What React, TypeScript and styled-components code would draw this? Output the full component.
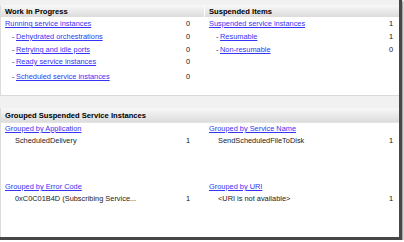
import React from 'react';
import styled, { createGlobalStyle } from 'styled-components';

const GlobalStyle = createGlobalStyle`
  html, body {
    margin: 0;
    padding: 0;
    background: #ffffff;
  }
  body {
    font-family: "Liberation Sans", Arial, sans-serif;
    font-size: 7.4px;
    color: #1a1a1a;
  }
`;

type Item = { label: string; value: number; space?: number };

const workItems: Item[] = [
    { label: 'Dehydrated orchestrations', value: 0, space: 1 },
    { label: 'Retrying and idle ports', value: 0, space: 1 },
    { label: 'Ready service instances', value: 0, space: 0 },
    { label: 'Scheduled service instances', value: 0, space: 3 },
];

const suspendedItems: Item[] = [
    { label: 'Resumable', value: 1, space: 1 },
    { label: 'Non-resumable', value: 0, space: 1 },
];

const groups = [
    { title: 'Grouped by Application', name: 'ScheduledDelivery', value: 1, side: 'left' },
    { title: 'Grouped by Service Name', name: 'SendScheduledFileToDisk', value: 1, side: 'right' },
    { title: 'Grouped by Error Code', name: '0xC0C01B4D (Subscribing Service...', value: 1, side: 'left' },
    { title: 'Grouped by URI', name: '<URI is not available>', value: 1, side: 'right' },
];

const App = () => {
    return (
        <>
            <GlobalStyle />
            <Frame>
                <TopSection>
                    <Column $side="left">
                        <Header>Work in Progress</Header>
                        <Body>
                            <Row $side="left">
                                <Link href="#">Running service instances</Link>
                                <Value>0</Value>
                            </Row>
                            {workItems.map((item) => (
                                <Row key={item.label} $side="left" $space={item.space}>
                                    <SubLabel>
                                        <Dash>-</Dash>
                                        <Link href="#">{item.label}</Link>
                                    </SubLabel>
                                    <Value>{item.value}</Value>
                                </Row>
                            ))}
                        </Body>
                    </Column>
                    <Column $side="right">
                        <Header>Suspended Items</Header>
                        <Body>
                            <Row $side="right">
                                <Link href="#">Suspended service instances</Link>
                                <Value>1</Value>
                            </Row>
                            {suspendedItems.map((item) => (
                                <Row key={item.label} $side="right" $space={item.space}>
                                    <SubLabel>
                                        <Dash>-</Dash>
                                        <Link href="#">{item.label}</Link>
                                    </SubLabel>
                                    <Value>{item.value}</Value>
                                </Row>
                            ))}
                        </Body>
                    </Column>
                </TopSection>

                <BottomSection>
                    <WideHeader>Grouped Suspended Service Instances</WideHeader>
                    <GroupGrid>
                        {groups.map((g) => (
                            <Group key={g.title} $side={g.side}>
                                <GroupTitle href="#">{g.title}</GroupTitle>
                                <GroupRow $side={g.side}>
                                    <span>{g.name}</span>
                                    <Value>{g.value}</Value>
                                </GroupRow>
                            </Group>
                        ))}
                    </GroupGrid>
                </BottomSection>
            </Frame>
        </>
    );
};

const Frame = styled.div`
  width: 399px;
  height: 232px;
  padding-top: 5px;
  background: #f1f1f1;
  border-right: 3px solid #474747;
  border-bottom: 3px solid #474747;
  box-shadow: 1px 1px 2px rgba(0, 0, 0, 0.5);
  display: flex;
  flex-direction: column;
`;

const TopSection = styled.div`
  height: 90px;
  display: grid;
  grid-template-columns: 203px 1fr;
  background: #ffffff;
  border-left: 1px solid #dcdcdc;
  border-bottom: 1px solid #dadada;
`;

const Column = styled.div<{ $side: string }>`
  display: flex;
  flex-direction: column;
  padding-left: ${(p) => (p.$side === 'left' ? '0' : '1px')};
`;

const Header = styled.div`
  height: 12px;
  display: flex;
  align-items: center;
  padding-left: 4px;
  background: linear-gradient(#f8f8f8, #dcdcdc);
  font-weight: 700;
  font-size: 7.6px;
  color: #000;
`;

const WideHeader = styled(Header)`
  height: 14px;
  border-bottom: 1px solid #e4e4e4;
`;

const Body = styled.div`
  padding-top: 1px;
  display: flex;
  flex-direction: column;
`;

const Row = styled.div<{ $side: string; $space?: number }>`
  height: 12px;
  line-height: 12px;
  margin-top: ${(p) => p.$space ?? 0}px;
  padding-left: 4px;
  padding-right: ${(p) => (p.$side === 'left' ? '14px' : '6px')};
  display: flex;
  justify-content: space-between;
  white-space: nowrap;
`;

const SubLabel = styled.span`
  display: flex;
  padding-left: 7px;
`;

const Dash = styled.span`
  width: 4px;
  color: #222;
`;

const Link = styled.a`
  color: #3434f4;
  text-decoration: underline;
`;

const Value = styled.span`
  color: #111;
`;

const BottomSection = styled.div`
  margin-top: 12px;
  flex: 1;
  display: flex;
  flex-direction: column;
  background: #ffffff;
  border-left: 1px solid #dcdcdc;
`;

const GroupGrid = styled.div`
  display: grid;
  grid-template-columns: 203px 1fr;
  grid-template-rows: 58px 1fr;
`;

const Group = styled.div<{ $side: string }>`
  display: flex;
  flex-direction: column;
  padding-left: ${(p) => (p.$side === 'left' ? '4px' : '5px')};
`;

const GroupTitle = styled(Link)`
  line-height: 12px;
  align-self: flex-start;
`;

const GroupRow = styled.div<{ $side: string }>`
  line-height: 12px;
  padding-left: ${(p) => (p.$side === 'left' ? '10px' : '9px')};
  padding-right: ${(p) => (p.$side === 'left' ? '14px' : '6px')};
  display: flex;
  justify-content: space-between;
  white-space: nowrap;
`;

export default App;
